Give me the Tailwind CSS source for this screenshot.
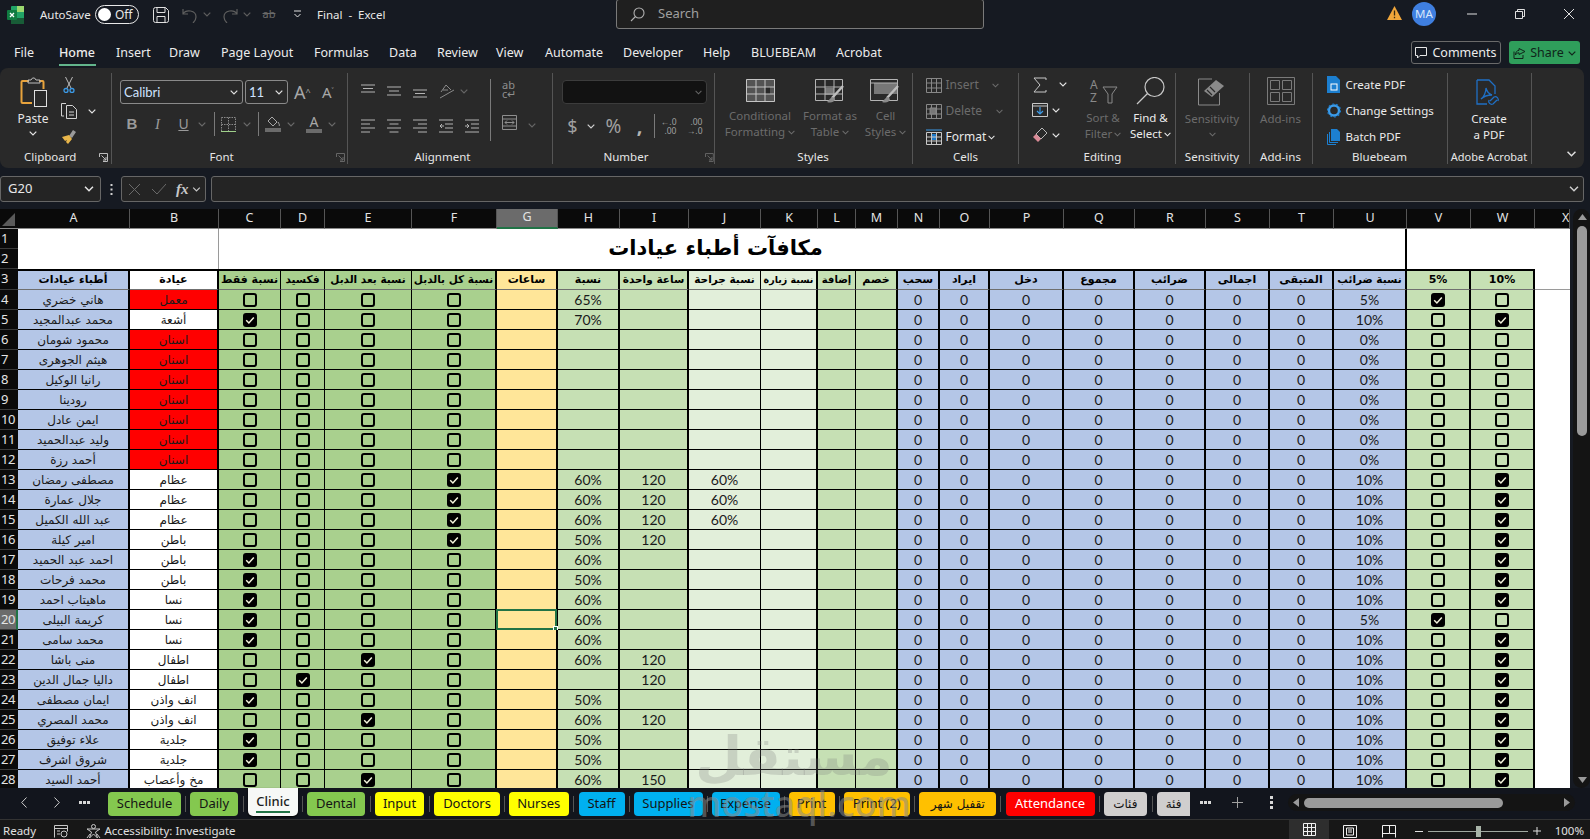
<!DOCTYPE html>
<html lang="en">
<head>
<meta charset="UTF-8">
<title>Final - Excel</title>
<script src="https://cdn.jsdelivr.net/npm/@tailwindcss/browser@4"></script>
</head>
<body class="w-[1590px] h-[839px] overflow-hidden bg-[#161a22] text-[#e8e8e8] font-['Noto_Sans',sans-serif] text-[12px]">

<svg class="hidden">
  <symbol id="chev" viewBox="0 0 8 5"><path d="M.7.7 4 4 7.3.7" fill="none" stroke="currentColor" stroke-width="1.2"/></symbol>
  <symbol id="launch" viewBox="0 0 9 9"><path d="M.5 4V.5H8.500V8.500H4M2.500 2.500 7 7M7 4V7H4" fill="none" stroke="currentColor"/></symbol>
  <symbol id="aTop" viewBox="0 0 14 14"><path d="M0 1h14M2 4.500h10M0 8h14" stroke="currentColor"/></symbol>
  <symbol id="aMid" viewBox="0 0 14 14"><path d="M0 3h14M2 7h10M0 11h14" stroke="currentColor"/></symbol>
  <symbol id="aBot" viewBox="0 0 14 14"><path d="M0 6h14M2 9.500h10M0 13h14" stroke="currentColor"/></symbol>
  <symbol id="aL" viewBox="0 0 14 14"><path d="M0 1h14M0 5h9M0 9h14M0 13h9" stroke="currentColor"/></symbol>
  <symbol id="aC" viewBox="0 0 14 14"><path d="M0 1h14M2.500 5h9M0 9h14M2.500 13h9" stroke="currentColor"/></symbol>
  <symbol id="aR" viewBox="0 0 14 14"><path d="M0 1h14M5 5h9M0 9h14M5 13h9" stroke="currentColor"/></symbol>
  <symbol id="check" viewBox="0 0 14 14"><path d="M3.200 7.300 5.900 10 10.800 4.500" fill="none" stroke="#f4f4dc" stroke-width="1.500"/></symbol>
</svg>

<!-- title bar -->
<div class="h-[29px] flex items-center relative">
  <svg class="ml-[7px] w-[17px] h-[18px] shrink-0" viewBox="0 0 17 18"><rect x="4" y="0" width="13" height="18" rx="1" fill="#21a366"/><rect x="10" y="0" width="7" height="6" fill="#9bd86f"/><rect x="4" y="12" width="13" height="6" fill="#185c37"/><rect x="0" y="4" width="10" height="10" rx="1" fill="#107c41"/><path d="M3 7l4 4M7 7l-4 4" stroke="#fff" stroke-width="1.300"/></svg>
  <span class="ml-[16px] w-[55px] text-[11.500px]">AutoSave</span>
  <div class="w-[44px] h-[19px] rounded-full border border-[#e8e8e8] flex items-center pl-[2px] gap-[4px]">
    <span class="w-[13px] h-[13px] rounded-full bg-white"></span><span class="text-[12px]">Off</span>
  </div>
  <svg class="ml-[14px] w-[16px] h-[16px]" viewBox="0 0 16 16" fill="none" stroke="#e0e0e0"><path d="M.5 2.500a2 2 0 0 1 2-2h10l3 3v10a2 2 0 0 1-2 2h-11a2 2 0 0 1-2-2zM4 .5v5h8v-5M4 15.500v-6h8v6"/></svg>
  <svg class="ml-[13px] w-[16px] h-[16px]" viewBox="0 0 16 16" fill="none" stroke="#5e5e5e" stroke-width="1.200"><path d="M1 2v5h5M1 7c3-5 13-4 13 3 0 2-1 4-3 6"/></svg>
  <svg class="ml-[5px] w-2 h-[5px] text-[#5e5e5e]"><use href="#chev"/></svg>
  <svg class="ml-[11px] w-[16px] h-[16px]" viewBox="0 0 16 16" fill="none" stroke="#5e5e5e" stroke-width="1.200"><path d="M15 2v5h-5M15 7C12 2 2 3 2 10c0 2 1 4 3 6"/></svg>
  <svg class="ml-[5px] w-2 h-[5px] text-[#5e5e5e]"><use href="#chev"/></svg>
  <span class="ml-[10px] w-[16px] text-[11px] text-[#6a6a6a] line-through text-center">ab</span>
  <svg class="ml-[16px] w-[9px] h-[9px]" viewBox="0 0 9 9" fill="none" stroke="#e0e0e0"><path d="M1 1h7M1.500 4l3 3 3-3"/></svg>
  <span class="ml-[15px] text-[11.500px] whitespace-pre">Final  -  Excel</span>
  <div class="absolute left-[616px] -top-px w-[368px] h-[30px] rounded-[3px] bg-[#1f1f1f] border border-[#7a7a7a] flex items-center pl-[13px]">
    <svg class="w-[15px] h-[15px]" viewBox="0 0 15 15" fill="none" stroke="#b0b0b0" stroke-width="1.100"><circle cx="9" cy="6" r="5"/><path d="M5.500 9.500 1 14"/></svg>
    <span class="ml-[13px] text-[13px] text-[#a0a0a0]">Search</span>
  </div>
  <svg class="absolute left-[1387px] top-[6px] w-[15px] h-[14px]" viewBox="0 0 15 14"><path d="M7.500 0 15 14H0z" fill="#f0a63a"/><path d="M7.500 4.500v5M7.500 10.800v1.500" stroke="#3a2a10" stroke-width="1.300"/></svg>
  <div class="absolute left-[1412px] top-[2px] w-[24px] h-[24px] rounded-full bg-[#3f7fe0] flex items-center justify-center text-[11.500px] text-[#d8e6fb]">MA</div>
  <svg class="absolute left-[1467px] top-[13px] w-[10px] h-[2px]"><path d="M0 1h10" stroke="#e0e0e0"/></svg>
  <svg class="absolute left-[1515px] top-[9px] w-[10px] h-[10px]" viewBox="0 0 10 10" fill="none" stroke="#e0e0e0"><path d="M.5 2.500h7v7h-7zM2.500 2.500v-2h7v7h-2"/></svg>
  <svg class="absolute left-[1564px] top-[9px] w-[10px] h-[10px]" viewBox="0 0 10 10" stroke="#e0e0e0"><path d="M0 0l10 10M10 0 0 10"/></svg>
</div>

<!-- ribbon tabs -->
<div class="mt-[12px] h-[23px] pl-[14px] flex items-start text-[12.500px] text-[#ececec]">
  <div class="h-[23px] pt-[3px] flex items-start">
    <span class="w-[45px]">File</span>
    <span class="w-[57px]"><span class="block w-[37px] pb-px border-b-2 border-[#63b58c] font-medium">Home</span></span>
    <span class="w-[53px]">Insert</span>
    <span class="w-[52px]">Draw</span>
    <span class="w-[93px]">Page Layout</span>
    <span class="w-[75px]">Formulas</span>
    <span class="w-[48px]">Data</span>
    <span class="w-[59px]">Review</span>
    <span class="w-[49px]">View</span>
    <span class="w-[78px]">Automate</span>
    <span class="w-[80px]">Developer</span>
    <span class="w-[48px]">Help</span>
    <span class="w-[85px]">BLUEBEAM</span>
    <span class="w-[575px]">Acrobat</span>
  </div>
  <div class="w-[90px] h-[23px] pt-[1px] rounded-[3px] border border-[#6a6a6a] flex items-center justify-center gap-[5px] text-[12.500px]">
    <svg class="w-[12px] h-[12px]" viewBox="0 0 12 12" fill="none" stroke="#e8e8e8"><path d="M.5.5h11v8H5l-2.500 2.500V8.500h-2z"/></svg>Comments
  </div>
  <div class="ml-[8px] w-[71px] h-[23px] pt-[1px] rounded-[3px] bg-[#2f9e5b] flex items-center justify-center gap-[4px] text-[#10251a]">
    <svg class="w-[13px] h-[12px]" viewBox="0 0 13 12" fill="none" stroke="#10251a"><path d="M1 4.500v7h9V8M6 1.500l6 3-6 3V5.800C4 5.800 3 7 2.500 8 2.500 5 4 3.500 6 3.300z"/></svg>
    <span class="text-[12.500px]">Share</span>
    <svg class="w-2 h-[5px]"><use href="#chev"/></svg>
  </div>
</div>

<!-- ribbon -->
<div class="mt-[4px] w-[1584px] h-[100px] pt-[5px] rounded-[8px] bg-[#292929] flex text-[11.500px] leading-[14px] text-[#e6e6e6]">

  <!-- Clipboard -->
  <div class="w-[111.500px] h-[91px] border-r border-[#555] flex flex-col">
    <div class="flex-1 flex pt-[4px]">
      <div class="ml-[5px] w-[56px] flex flex-col items-center">
        <svg class="w-[27px] h-[30px]" viewBox="0 0 27 30" fill="none"><path d="M9 4H2.500a1 1 0 0 0-1 1v20a1 1 0 0 0 1 1H12M19 4h3.500a1 1 0 0 1 1 1v7" stroke="#e8a33d" stroke-width="2"/><path d="M8 6V3h3l1.500-2h2L16 3h4v3z" stroke="#bdbdbd"/><rect x="14.500" y="13.500" width="12" height="16" stroke="#e0e0e0"/></svg>
        <span class="mt-[5px] text-[12px]">Paste</span>
        <svg class="mt-[5px] w-2 h-[5px]"><use href="#chev"/></svg>
      </div>
      <div class="flex flex-col gap-[10px]">
        <svg class="ml-[2px] w-[12px] h-[16px]" viewBox="0 0 12 16" fill="none"><path d="M2.500 0 8 11M9.500 0 4 11" stroke="#bdbdbd"/><circle cx="3" cy="13.500" r="2" stroke="#3c9be8" stroke-width="1.300"/><circle cx="9" cy="13.500" r="2" stroke="#3c9be8" stroke-width="1.300"/></svg>
        <div class="flex items-center">
          <svg class="w-[16px] h-[16px]" viewBox="0 0 16 16" fill="none" stroke="#d4d4d4"><path d="M3 13H.5V.5H5M5.500 2.500h6l4 4v9h-10zM8 9h5M8 12h5"/></svg>
          <svg class="ml-[11px] w-2 h-[5px]"><use href="#chev"/></svg>
        </div>
        <svg class="w-[16px] h-[16px]" viewBox="0 0 16 16"><path d="M8 7l4-6 3 2-4 6z" fill="#9a9a9a"/><path d="M1 8l7-2 3 4-4 5-2-2 1-2-2 1z" fill="#e9b64a"/></svg>
      </div>
    </div>
    <div class="h-[14px] flex items-center pl-[24px]"><span class="w-[75px]">Clipboard</span><svg class="w-[9px] h-[9px] text-[#bdbdbd]"><use href="#launch"/></svg></div>
  </div>

  <!-- Font -->
  <div class="w-[236px] h-[91px] border-r border-[#555] flex flex-col">
    <div class="flex-1 pt-[7px]">
      <div class="flex items-center pl-[8.500px]">
        <div class="w-[122.500px] h-[24px] rounded-[3px] border border-[#8a8a8a] pl-[3px] pr-[4px] flex items-center justify-between text-[#cfe4ff] font-['Lato',sans-serif] text-[13px]">Calibri<svg class="w-2 h-[5px] text-[#e0e0e0]"><use href="#chev"/></svg></div>
        <div class="ml-[2.500px] w-[43px] h-[24px] rounded-[3px] border border-[#8a8a8a] pl-[3px] pr-[4px] flex items-center justify-between text-[#cfe4ff] font-['Lato',sans-serif] text-[13px]">11<svg class="w-2 h-[5px] text-[#e0e0e0]"><use href="#chev"/></svg></div>
        <span class="ml-[6px] w-[28px] text-[18px] text-[#a8a8a8]">A<sup class="text-[9px]">^</sup></span>
        <span class="w-[14px] text-[15px] text-[#a8a8a8]">A<sup class="text-[8px]">˅</sup></span>
      </div>
      <div class="mt-[10px] pl-[10px] h-[20px] flex items-center text-[#9a9a9a]">
        <span class="w-[21px] text-center text-[15px] font-bold font-['Liberation_Sans',sans-serif]">B</span>
        <span class="w-[30px] text-center text-[15px] italic font-['Liberation_Serif',serif]">I</span>
        <span class="w-[22px] text-center text-[14px] underline">U</span>
        <span class="w-[15px] flex justify-center"><svg class="w-2 h-[5px] text-[#6a6a6a]"><use href="#chev"/></svg></span>
        <span class="ml-[4px] shrink-0 w-px h-[24px] bg-[#7a7a7a]"></span>
        <svg class="ml-[6px] w-[15px] h-[15px]" viewBox="0 0 15 15" fill="none" stroke="#8a8a8a" stroke-dasharray="1.500 1"><path d="M.5.5h14v14H.5zM7.500.5v14M.5 7.500h14"/><path d="M0 14.500h15" stroke="#9fd08a" stroke-dasharray="none"/></svg>
        <span class="w-[22px] flex justify-center"><svg class="w-2 h-[5px] text-[#6a6a6a]"><use href="#chev"/></svg></span>
        <span class="shrink-0 w-px h-[24px] bg-[#7a7a7a]"></span>
        <svg class="ml-[6.500px] w-[16px] h-[16px]" viewBox="0 0 16 16" fill="none"><path d="M7 1l5 5-4 4-5-5zM13 6c1 2 2 3 1 4" stroke="#a8a8a8"/><rect y="12" width="16" height="4" fill="#6b6b6b"/></svg>
        <span class="w-[20px] flex justify-center"><svg class="w-2 h-[5px] text-[#6a6a6a]"><use href="#chev"/></svg></span>
        <div class="ml-[5px] w-[16px] h-[18px] flex flex-col items-center text-[14px] leading-[13px] text-[#a8a8a8]">A<span class="mt-[1px] w-[16px] h-[4px] bg-[#6b6b6b]"></span></div>
        <span class="w-[20px] flex justify-center"><svg class="w-2 h-[5px] text-[#6a6a6a]"><use href="#chev"/></svg></span>
      </div>
    </div>
    <div class="h-[14px] flex items-center pl-[98px]"><span class="w-[126px]">Font</span><svg class="w-[9px] h-[9px] text-[#666]"><use href="#launch"/></svg></div>
  </div>

  <!-- Alignment -->
  <div class="w-[205px] h-[91px] border-r border-[#555] flex flex-col">
    <div class="flex-1 pl-[13.500px] flex">
      <div class="w-[129px] text-[#b4b4b4]">
        <div class="mt-[10px] flex items-center gap-[12px]">
          <svg class="w-[14px] h-[14px]"><use href="#aTop"/></svg><svg class="w-[14px] h-[14px]"><use href="#aMid"/></svg><svg class="w-[14px] h-[14px]"><use href="#aBot"/></svg>
          <svg class="w-[16px] h-[16px]" viewBox="0 0 16 16" fill="none" stroke="#8a8a8a"><path d="M2 9l5-7 5 5M4 7h5M1 15 15 7"/></svg>
          <svg class="-ml-[7px] w-2 h-[5px] text-[#666]"><use href="#chev"/></svg>
        </div>
        <div class="mt-[20px] flex items-center gap-[12px]">
          <svg class="w-[14px] h-[14px]"><use href="#aL"/></svg><svg class="w-[14px] h-[14px]"><use href="#aC"/></svg><svg class="w-[14px] h-[14px]"><use href="#aR"/></svg>
          <svg class="w-[14px] h-[14px]" viewBox="0 0 14 14" fill="none" stroke="currentColor"><path d="M0 1h14M6 5h8M6 9h8M0 13h14M5 7H1M3 5 1 7l2 2"/></svg>
          <svg class="w-[14px] h-[14px]" viewBox="0 0 14 14" fill="none" stroke="currentColor"><path d="M0 1h14M6 5h8M6 9h8M0 13h14M0 7h4M2 5l2 2-2 2"/></svg>
        </div>
      </div>
      <span class="mt-[6px] shrink-0 h-[62px] w-px bg-[#7a7a7a]"></span>
      <div class="ml-[11px] text-[#8e8e8e]">
        <div class="mt-[7px] w-[15px] text-[11px] leading-[9px]">ab<br>c↵</div>
        <svg class="mt-[17px] w-[15px] h-[15px]" viewBox="0 0 15 15" fill="none" stroke="#8e8e8e"><path d="M.5.5h14v14H.5zM.5 4h14M.5 11h14M3 7.500h9M5 5.500l-2 2 2 2M10 5.500l2 2-2 2"/></svg>
      </div>
      <svg class="mt-[50px] ml-[11px] w-2 h-[5px] text-[#666]"><use href="#chev"/></svg>
    </div>
    <div class="h-[14px] flex items-center pl-[67px]"><span class="w-[130px]">Alignment</span></div>
  </div>

  <!-- Number -->
  <div class="w-[162px] h-[91px] border-r border-[#555] flex flex-col">
    <div class="flex-1 pl-[9px]">
      <div class="mt-[7px] w-[145px] h-[24px] rounded-[4px] bg-[#121212] border border-[#3c3c3c] flex items-center justify-end pr-[4px]"><svg class="w-[7px] h-[5px] text-[#666]"><use href="#chev"/></svg></div>
      <div class="mt-[10px] h-[24px] flex items-center text-[#a0a0a0]">
        <span class="ml-[4px] w-[14px] text-center text-[18px]">$</span>
        <svg class="ml-[7px] w-2 h-[5px] text-[#d0d0d0]"><use href="#chev"/></svg>
        <span class="ml-[8px] w-[22px] text-center text-[19px]">%</span>
        <span class="ml-[10px] w-[10px] text-center text-[20px] font-bold text-[#b4b4b4]">,</span>
        <span class="ml-[9px] shrink-0 w-px h-[24px] bg-[#7a7a7a]"></span>
        <span class="ml-[6px] w-[16px] text-[8.500px] leading-[9px] text-right">←.0<br>.00</span>
        <span class="ml-[10px] w-[16px] text-[8.500px] leading-[9px] text-right">.00<br>→.0</span>
      </div>
    </div>
    <div class="h-[14px] flex items-center pl-[51px]"><span class="w-[103px]">Number</span><svg class="w-[9px] h-[9px] text-[#666]"><use href="#launch"/></svg></div>
  </div>

  <!-- Styles -->
  <div class="w-[198px] h-[91px] border-r border-[#555] flex flex-col">
    <div class="flex-1 flex pl-[4px] text-[#6c6c6c] text-center leading-[16px]">
      <div class="w-[83px] flex flex-col items-center">
        <svg class="mt-[6px] w-[29px] h-[23px]" viewBox="0 0 29 23" fill="none"><path d="M0 0h29v23H0z" fill="#777" fill-opacity=".55"/><path d="M19 8h5v7h-5z" fill="#292929"/><path d="M.5.5h28v22H.5zM.5 8h28M.5 15h28M10 .5v22M19 .5v22" stroke="#c4c4c4"/></svg>
        <span class="mt-[6px]">Conditional</span>
        <span class="flex items-center gap-[3px]">Formatting<svg class="w-[7px] h-[5px]"><use href="#chev"/></svg></span>
      </div>
      <div class="w-[57px] flex flex-col items-center">
        <svg class="mt-[6px] w-[31px] h-[25px]" viewBox="0 0 31 25" fill="none"><path d="M10 9h9v7h-9z" fill="#777"/><path d="M.5.5h27v21H.5zM.5 8h27M.5 15h27M10 .5v21M19 .5v21" stroke="#b4b4b4"/><path d="M28 7 17 19" stroke="#bdbdbd" stroke-width="2.500"/><path d="M18 18c-2 0-4 3-6 5 3 1 7 1 8-3z" fill="#8a8a8a"/></svg>
        <span class="mt-[4px] whitespace-nowrap">Format as</span>
        <span class="flex items-center gap-[3px]">Table<svg class="w-[7px] h-[5px]"><use href="#chev"/></svg></span>
      </div>
      <div class="ml-[2px] w-[50px] flex flex-col items-center">
        <svg class="mt-[6px] w-[31px] h-[25px]" viewBox="0 0 31 25" fill="none"><path d="M4 4h23v11H4z" fill="#777"/><path d="M.5.5h27v21H.5z" stroke="#b4b4b4"/><path d="M.5 4h27" stroke="#b4b4b4"/><path d="M28 7 17 19" stroke="#bdbdbd" stroke-width="2.500"/><path d="M18 18c-2 0-4 3-6 5 3 1 7 1 8-3z" fill="#8a8a8a"/></svg>
        <span class="mt-[4px]">Cell</span>
        <span class="flex items-center gap-[3px]">Styles<svg class="w-[7px] h-[5px]"><use href="#chev"/></svg></span>
      </div>
    </div>
    <div class="h-[14px] text-center">Styles</div>
  </div>

  <!-- Cells -->
  <div class="w-[106px] h-[91px] border-r border-[#555] flex flex-col">
    <div class="flex-1 pl-[13px] pt-[4px] flex flex-col gap-[10px] text-[12px]">
      <div class="h-[16px] flex items-center text-[#6c6c6c]">
        <svg class="w-[16px] h-[15px]" viewBox="0 0 16 15" fill="none" stroke="#888"><path d="M.5.5h15v14H.5zM.5 5h15M.5 10h15M5.500.5v14M10.500.5v14"/></svg>
        <span class="ml-[4px] w-[46px]">Insert</span><svg class="w-[7px] h-[5px]"><use href="#chev"/></svg>
      </div>
      <div class="h-[16px] flex items-center text-[#6c6c6c]">
        <svg class="w-[16px] h-[15px]" viewBox="0 0 16 15" fill="none" stroke="#888"><path d="M.5.5h15v14H.5zM.5 5h15M.5 10h15M5.500.5v14M10.500.5v14"/><path d="M4 4h6v6H4z" fill="#777"/></svg>
        <span class="ml-[4px] w-[50px]">Delete</span><svg class="w-[7px] h-[5px]"><use href="#chev"/></svg>
      </div>
      <div class="h-[16px] flex items-center text-[#e8e8e8]">
        <svg class="w-[16px] h-[16px]" viewBox="0 0 16 16" fill="none"><path d="M5 5h6v6H5z" fill="#1c78c8"/><path d="M.5 3.500h15v12H.5zM.5 8h15M.5 12h15M5.500 3.500v12M10.500 3.500v12" stroke="#c8c8c8"/><path d="M0 1h16" stroke="#3c9be8"/></svg>
        <span class="ml-[4px] w-[42px]">Format</span><svg class="w-[7px] h-[5px]"><use href="#chev"/></svg>
      </div>
    </div>
    <div class="h-[14px] text-center pl-[1px]">Cells</div>
  </div>

  <!-- Editing -->
  <div class="w-[157px] h-[91px] border-r border-[#555] flex flex-col">
    <div class="flex-1 flex">
      <div class="w-[57px] pl-[13px] pt-[3px] flex flex-col gap-[9px]">
        <div class="h-[17px] flex items-center"><svg class="ml-[1px] w-[14px] h-[16px]" viewBox="0 0 14 16" fill="none" stroke="#c8c8c8"><path d="M13 3V1H1l6 7-6 7h12v-2"/></svg><svg class="ml-[12px] w-2 h-[5px]"><use href="#chev"/></svg></div>
        <div class="h-[16px] flex items-center"><svg class="w-[16px] h-[14px]" viewBox="0 0 16 14" fill="none"><path d="M.5.5h15v13H.5zM.5 3h15" stroke="#c8c8c8"/><path d="M8 4v7M5 8l3 3 3-3" stroke="#3c9be8" stroke-width="1.200"/></svg><svg class="ml-[4px] w-2 h-[5px]"><use href="#chev"/></svg></div>
        <div class="h-[16px] flex items-center"><svg class="w-[16px] h-[16px]" viewBox="0 0 16 16" fill="none"><path d="M10 1l5 5-6 6-5-5z" stroke="#b8b8b8"/><path d="M4 7l5 5-3 3-5-5z" fill="#d98a96"/></svg><svg class="ml-[4px] w-2 h-[5px]"><use href="#chev"/></svg></div>
      </div>
      <div class="w-[55px] flex flex-col items-center text-[#6c6c6c] leading-[16px]">
        <svg class="mt-[4px] w-[29px] h-[28px] overflow-visible" viewBox="0 0 29 28" fill="none" stroke="#8a8a8a"><text x="1" y="12" font-size="12" fill="#8a8a8a" stroke="none">A</text><text x="1" y="25" font-size="12" fill="#8a8a8a" stroke="none">Z</text><path d="M14 10h14l-5 7v9h-4v-9z"/></svg>
        <span class="mt-[5px] whitespace-nowrap">Sort &amp;</span>
        <span class="flex items-center gap-[2px]">Filter<svg class="w-[7px] h-[5px]"><use href="#chev"/></svg></span>
      </div>
      <div class="w-[40px] flex flex-col items-center text-[#ececec] leading-[16px]">
        <svg class="mt-[4px] w-[29px] h-[28px]" viewBox="0 0 29 28" fill="none" stroke="#c8c8c8" stroke-width="1.200"><circle cx="18.500" cy="10" r="9.500"/><path d="M11.500 16.500 1 27"/></svg>
        <span class="mt-[5px] whitespace-nowrap">Find &amp;</span>
        <span class="flex items-center gap-[2px]">Select<svg class="w-[7px] h-[5px]"><use href="#chev"/></svg></span>
      </div>
    </div>
    <div class="h-[14px] pl-[65px]">Editing</div>
  </div>

  <!-- Sensitivity -->
  <div class="w-[74px] h-[91px] border-r border-[#555] flex flex-col items-center">
    <svg class="mt-[4px] w-[28px] h-[29px]" viewBox="0 0 28 29" fill="none"><path d="M14 2H.5v26h21V16" stroke="#8a8a8a"/><path d="M6 14 18 3l8 6-12 11z" fill="#8a8a8a"/><path d="M9 13l5 5M12 10l5 5" stroke="#292929" stroke-width="1.200"/></svg>
    <span class="mt-[5px] leading-[16px] text-[#6c6c6c]">Sensitivity</span>
    <svg class="mt-[5px] w-[7px] h-[5px] text-[#6c6c6c]"><use href="#chev"/></svg>
    <span class="mt-auto h-[14px]">Sensitivity</span>
  </div>

  <!-- Add-ins -->
  <div class="w-[63px] h-[91px] border-r border-[#555] flex flex-col items-center">
    <svg class="mt-[4px] w-[28px] h-[28px]" viewBox="0 0 28 28" fill="none" stroke="#7a7a7a"><path d="M.5.5h27v27H.5zM3.500 3.500h9v9h-9zM15.500 3.500h9v9h-9zM3.500 15.500h9v9h-9zM15.500 15.500h9v9h-9z"/></svg>
    <span class="mt-[6px] leading-[16px] text-[#6c6c6c]">Add-ins</span>
    <span class="mt-auto h-[14px]">Add-ins</span>
  </div>

  <!-- Bluebeam -->
  <div class="w-[135px] h-[91px] border-r border-[#555] flex flex-col">
    <div class="flex-1 pl-[14px] pt-[3px] flex flex-col gap-[9px] text-[11.500px] text-[#ececec]">
      <div class="h-[17px] flex items-center gap-[5px]"><svg class="w-[14px] h-[17px]" viewBox="0 0 14 17"><path d="M0 0h9l4 4v13H0z" fill="#1c7fd0"/><rect x="4" y="8" width="6" height="6" fill="none" stroke="#fff"/></svg>Create PDF</div>
      <div class="h-[17px] flex items-center gap-[5px]"><svg class="w-[14px] h-[15px]" viewBox="0 0 14 15"><circle cx="7" cy="7.500" r="5" fill="none" stroke="#3c9be8" stroke-width="2.400"/><circle cx="7" cy="7.500" r="6.500" fill="none" stroke="#1c7fd0" stroke-width="1.200" stroke-dasharray="2 2"/></svg>Change Settings</div>
      <div class="h-[17px] flex items-center gap-[5px]"><svg class="w-[14px] h-[16px]" viewBox="0 0 14 16" fill="none"><path d="M4 0h6l3 3v9H4z" fill="#1c7fd0"/><path d="M2.500 3v10.500H11M.5 5v10.500H9" stroke="#1c7fd0"/></svg>Batch PDF</div>
    </div>
    <div class="h-[14px] text-center">Bluebeam</div>
  </div>

  <!-- Adobe Acrobat -->
  <div class="w-[84px] h-[91px] border-r border-[#555] flex flex-col items-center">
    <svg class="mt-[6px] w-[26px] h-[29px]" viewBox="0 0 26 29" fill="none" stroke="#1f6fc4" stroke-width="1.300"><path d="M1 1h12l6 6v8M1 1v24h10"/><path d="M5 20c3-2 5-7 5-11 1 4 3 6 6 7-4 0-8 1-11 4z"/><path d="M14 22l4-4a3 3 0 0 1 4 4M21 21l-4 4a3 3 0 0 1-4-4"/></svg>
    <span class="mt-[3px] leading-[16px] text-[11.500px] text-[#ececec]">Create</span>
    <span class="leading-[16px] text-[11.500px] text-[#ececec]">a PDF</span>
    <span class="mt-auto h-[14px] whitespace-nowrap text-[11px]">Adobe Acrobat</span>
  </div>

  <div class="flex-1 flex items-end justify-center pb-[11px] pl-[27px]"><svg class="w-[11px] h-[6px] text-[#e0e0e0]"><use href="#chev"/></svg></div>
</div>

<!-- formula bar -->
<div class="mt-[8px] h-[26px] flex items-center w-[1584px]">
  <div class="w-[101px] h-[26px] rounded-[3px] bg-[#242424] border border-[#666] pl-[7px] pr-[6px] flex items-center justify-between text-[13px]">G20<svg class="w-[10px] h-[6px]"><use href="#chev"/></svg></div>
  <svg class="ml-[9px] w-[3px] h-[13px]" viewBox="0 0 3 13" fill="#d0d0d0"><rect width="2" height="2" x=".5" y="1"/><rect width="2" height="2" x=".5" y="5.500"/><rect width="2" height="2" x=".5" y="10"/></svg>
  <div class="ml-[8px] w-[85px] h-[26px] rounded-[3px] bg-[#242424] border border-[#666] flex items-center pl-[7px]">
    <svg class="w-[11px] h-[11px]" viewBox="0 0 11 11" stroke="#6a6a6a"><path d="M0 0l11 11M11 0 0 11"/></svg>
    <svg class="ml-[12px] w-[14px] h-[11px]" viewBox="0 0 14 11" fill="none" stroke="#6a6a6a"><path d="M0 5l5 5 9-10"/></svg>
    <span class="ml-[10px] font-['Liberation_Serif',serif] italic font-bold text-[15px] text-[#c8c8c8]">fx</span>
    <svg class="ml-[3px] w-[9px] h-[5px] text-[#c8c8c8]"><use href="#chev"/></svg>
  </div>
  <div class="ml-[5px] flex-1 h-[26px] rounded-[3px] bg-[#242424] border border-[#666] flex items-center justify-end pr-[4px]"><svg class="w-[10px] h-[6px] text-[#d0d0d0]"><use href="#chev"/></svg></div>
</div>

<!-- sheet + vertical scrollbar -->
<div class="mt-[7px] h-[579px] flex">
  <div id="sheet" class="w-[1570px] h-[579px] overflow-hidden grid content-start grid-cols-[18px_112px_89px_62px_44px_87px_85px_61px_62px_69px_72px_57px_38px_42px_42px_50px_74px_71px_71px_64px_64px_73px_64px_64px_35px] grid-rows-[19.500px_20.500px_19.500px_21.500px_repeat(25,20px)] bg-white text-black font-['Lato',sans-serif] text-[14px]"></div>
  <div class="ml-[3px] w-[17px] h-[579px] rounded-full bg-[#141414] flex flex-col items-center pt-[5px] pl-[1px]">
    <svg class="w-[9px] h-[6px]" viewBox="0 0 9 6"><path d="M4.500 0 9 6H0z" fill="#9a9a9a"/></svg>
    <div class="mt-[6px] w-[10px] h-[210px] rounded-full bg-[#9a9a9a]"></div>
    <svg class="mt-auto mb-[5px] w-[9px] h-[6px]" viewBox="0 0 9 6"><path d="M4.500 6 9 0H0z" fill="#9a9a9a"/></svg>
  </div>
</div>

<!-- sheet tabs -->
<div class="relative h-[32px] bg-[#12151d] border-b border-[#333] flex text-[13px] text-[#141414]">
  <div class="w-[108px] h-[28px] flex items-center text-[#cfcfcf] text-[14px]">
    <svg class="ml-[21px] w-[6px] h-[11px]" viewBox="0 0 6 11" fill="none" stroke="#cfcfcf"><path d="M5.500.5.700 5.500l4.800 5"/></svg>
    <svg class="ml-[27px] w-[6px] h-[11px]" viewBox="0 0 6 11" fill="none" stroke="#cfcfcf"><path d="M.5.5l4.800 5-4.800 5"/></svg>
    <svg class="ml-[19px] w-[11px] h-[3px]" viewBox="0 0 11 3" fill="#d8d8d8"><rect width="3" height="3"/><rect x="4" width="3" height="3"/><rect x="8" width="3" height="3"/></svg>
  </div>
  <div class="flex items-start pt-[4px]">
    <div class="w-[73px] h-[24px] rounded-[4px] bg-[#84c84f] flex items-center justify-center">Schedule</div>
    <span class="mx-[4px] mt-[4px] w-px h-[16px] bg-[#555]"></span>
    <div class="w-[48px] h-[24px] rounded-[4px] bg-[#84c84f] flex items-center justify-center">Daily</div>
    <span class="mx-[4.500px] mt-[4px] w-px h-[16px] bg-[#555]"></span>
    <div class="-mt-[4px] w-[50px] h-[28px] rounded-b-[5px] bg-[#f7f8f6] flex flex-col items-center justify-end pb-[3px] font-medium text-[#1d1d1d] shadow-[0_1px_2px_#000]"><span class="leading-[18px]">Clinic</span><span class="mt-[1px] w-[34px] h-[2px] bg-[#217346]"></span></div>
    <span class="mx-[4px] mt-[4px] w-px h-[16px] bg-[#555]"></span>
    <div class="w-[58px] h-[24px] rounded-[4px] bg-[#84c84f] flex items-center justify-center">Dental</div>
    <span class="mx-[4.500px] mt-[4px] w-px h-[16px] bg-[#555]"></span>
    <div class="w-[49px] h-[24px] rounded-[4px] bg-[#ffff00] flex items-center justify-center">Input</div>
    <span class="mx-[4.500px] mt-[4px] w-px h-[16px] bg-[#555]"></span>
    <div class="w-[66px] h-[24px] rounded-[4px] bg-[#ffff00] flex items-center justify-center">Doctors</div>
    <span class="mx-[4px] mt-[4px] w-px h-[16px] bg-[#555]"></span>
    <div class="w-[59.500px] h-[24px] rounded-[4px] bg-[#ffff00] flex items-center justify-center">Nurses</div>
    <span class="mx-[4.500px] mt-[4px] w-px h-[16px] bg-[#555]"></span>
    <div class="w-[46px] h-[24px] rounded-[4px] bg-[#00b0f0] flex items-center justify-center">Staff</div>
    <span class="mx-[4px] mt-[4px] w-px h-[16px] bg-[#555]"></span>
    <div class="w-[69px] h-[24px] rounded-[4px] bg-[#00b0f0] flex items-center justify-center">Supplies</div>
    <span class="mx-[4px] mt-[4px] w-px h-[16px] bg-[#555]"></span>
    <div class="w-[68px] h-[24px] rounded-[4px] bg-[#00b0f0] flex items-center justify-center">Expense</div>
    <span class="mx-[4px] mt-[4px] w-px h-[16px] bg-[#555]"></span>
    <div class="w-[46px] h-[24px] rounded-[4px] bg-[#ffc000] flex items-center justify-center">Print</div>
    <span class="mx-[4px] mt-[4px] w-px h-[16px] bg-[#555]"></span>
    <div class="w-[66.600px] h-[24px] rounded-[4px] bg-[#ffc000] flex items-center justify-center">Print (2)</div>
    <span class="mx-[4.200px] mt-[4px] w-px h-[16px] bg-[#555]"></span>
    <div class="w-[76.700px] h-[24px] rounded-[4px] bg-[#ffc000] flex items-center justify-center font-['DejaVu_Sans',sans-serif] text-[12px]">تقفيل شهر</div>
    <span class="mx-[4.200px] mt-[4px] w-px h-[16px] bg-[#555]"></span>
    <div class="w-[89px] h-[24px] rounded-[4px] bg-[#ff0000] flex items-center justify-center text-white">Attendance</div>
    <span class="mx-[4px] mt-[4px] w-px h-[16px] bg-[#555]"></span>
    <div class="w-[43.500px] h-[24px] rounded-[4px] bg-[#d0cece] flex items-center justify-center font-['DejaVu_Sans',sans-serif] text-[12px]">فئات</div>
    <span class="mx-[4.500px] mt-[4px] w-px h-[16px] bg-[#555]"></span>
    <div class="w-[33px] h-[24px] rounded-l-[4px] bg-[#d0cece] flex items-center justify-center font-['DejaVu_Sans',sans-serif] text-[12px]">فئة</div>
  </div>
  <svg class="ml-[10px] mt-[13px] w-[11px] h-[3px]" viewBox="0 0 11 3" fill="#d8d8d8"><rect width="3" height="3"/><rect x="4" width="3" height="3"/><rect x="8" width="3" height="3"/></svg>
  <svg class="ml-[21px] mt-[9px] w-[11px] h-[11px]" viewBox="0 0 11 11" stroke="#a0a0a0"><path d="M5.500 0v11M0 5.500h11"/></svg>
  <svg class="ml-[27px] mt-[8px] w-[3px] h-[13px]" viewBox="0 0 3 13" fill="#d8d8d8"><rect width="3" height="3"/><rect y="5" width="3" height="3"/><rect y="10" width="3" height="3"/></svg>
  <div class="ml-[15px] mt-[6px] w-[287px] h-[17px] rounded-full bg-[#141414] flex items-center pl-[4.500px] pr-[5px]">
    <svg class="w-[6px] h-[9px]" viewBox="0 0 6 9"><path d="M0 4.500 6 0v9z" fill="#9a9a9a"/></svg>
    <div class="ml-[5.500px] w-[199px] h-[10px] rounded-full bg-[#9a9a9a]"></div>
    <svg class="ml-auto w-[6px] h-[9px]" viewBox="0 0 6 9"><path d="M6 4.500 0 0v9z" fill="#9a9a9a"/></svg>
  </div>
  <!-- watermark -->
  <div class="absolute left-[698px] top-[0px] w-[202px] flex justify-center text-[36px] leading-[32px] font-medium text-[#8a8a8a]/55 whitespace-nowrap">mostaql.com</div>
  <div class="absolute left-[696px] -top-[61px] w-[196px] h-[60px] flex justify-center text-[54px] leading-[60px] font-bold font-['DejaVu_Sans',sans-serif] text-[#777]/25 whitespace-nowrap">مستقل</div>
</div>

<!-- status bar -->
<div class="h-[19px] pt-[3px] bg-[#171717] flex items-center text-[11.500px] text-[#e0e0e0]">
  <span class="ml-[3px] w-[51px]">Ready</span>
  <svg class="w-[14px] h-[13px]" viewBox="0 0 14 13" fill="none" stroke="#c8c8c8"><path d="M.5 12.500V.5h13v6M.5 3.500h13M3 6h3M3 9h3"/><circle cx="10" cy="9" r="3"/></svg>
  <svg class="ml-[17.500px] w-[15px] h-[15px]" viewBox="0 0 15 15" fill="none" stroke="#c8c8c8"><circle cx="7.500" cy="2.500" r="2"/><path d="M1 5h13L9.500 8l2 6-4-4-4 4 2-6zM11 10l3 4M4 10l-3 4"/></svg>
  <span class="ml-[4px]">Accessibility: Investigate</span>
  <div class="ml-auto -mt-[3px] w-[40px] h-[19px] bg-[#2e2e2e] flex items-center justify-center">
    <svg class="w-[13px] h-[13px]" viewBox="0 0 13 13" fill="none" stroke="#f0f0f0"><path d="M.5.5h12v12H.5zM.5 4.500h12M.5 8.500h12M4.500.5v12M8.500.5v12"/></svg>
  </div>
  <svg class="ml-[13.500px] w-[14px] h-[13px]" viewBox="0 0 14 13" fill="none" stroke="#f0f0f0"><path d="M.5.5h13v12H.5zM3.500 3h7v7h-7zM5 5h4M5 7h4"/></svg>
  <svg class="ml-[25.500px] w-[14px] h-[13px]" viewBox="0 0 14 13" fill="none" stroke="#f0f0f0"><path d="M.5 12.500V.5h13v12M.5 8.500h7V.5M7.500 8.500h6"/></svg>
  <span class="ml-[19px] w-[8px] h-px bg-[#e0e0e0]"></span>
  <div class="relative ml-[5px] w-[99.500px] h-px bg-[#a0a8a0]"><span class="absolute left-[48px] -top-[5px] w-[5px] h-[11px] bg-[#a8b4a8]"></span></div>
  <svg class="ml-[5.500px] w-[8px] h-[8px]" viewBox="0 0 8 8" stroke="#e0e0e0"><path d="M4 0v8M0 4h8"/></svg>
  <span class="ml-[13.500px] mr-[6px]">100%</span>
</div>

<script>
  // columns: background, right border and heading size of each data column
  const columns = [
    { bg: 'bg-[#b4c6e7]', line: 'border-r-2', size: 'text-[11px]', head: 'أطباء عيادات' },
    { bg: 'bg-white', line: 'border-r-2', size: 'text-[11px]', head: 'عيادة' },
    { bg: 'bg-[#a9d08e]', line: 'border-r', size: 'text-[11px]', head: 'نسبة فقط' },
    { bg: 'bg-[#a9d08e]', line: 'border-r', size: 'text-[10.500px]', head: 'فكسيد' },
    { bg: 'bg-[#a9d08e]', line: 'border-r', size: 'text-[10.500px]', head: 'نسبة بعد الدبل' },
    { bg: 'bg-[#a9d08e]', line: 'border-r-2', size: 'text-[10.500px]', head: 'نسبة كل بالدبل' },
    { bg: 'bg-[#ffe699]', line: 'border-r-2', size: 'text-[11px]', head: 'ساعات' },
    { bg: 'bg-[#c6e0b4]', line: 'border-r-2', size: 'text-[11px]', head: 'نسبة' },
    { bg: 'bg-[#c6e0b4]', line: 'border-r-2', size: 'text-[10.500px]', head: 'ساعة واحدة' },
    { bg: 'bg-[#e2efda]', line: 'border-r', size: 'text-[10.500px]', head: 'نسبة جراحة' },
    { bg: 'bg-[#e2efda]', line: 'border-r-2', size: 'text-[9.500px]', head: 'نسبة زيارة' },
    { bg: 'bg-[#c6e0b4]', line: 'border-r', size: 'text-[10px]', head: 'إضافة' },
    { bg: 'bg-[#c6e0b4]', line: 'border-r-2', size: 'text-[11px]', head: 'خصم' },
    { bg: 'bg-[#b4c6e7]', line: 'border-r-2', size: 'text-[11px]', head: 'سحب' },
    { bg: 'bg-[#b4c6e7]', line: 'border-r-2', size: 'text-[11px]', head: 'ايراد' },
    { bg: 'bg-[#b4c6e7]', line: 'border-r-2', size: 'text-[11px]', head: 'دخل' },
    { bg: 'bg-[#b4c6e7]', line: 'border-r-2', size: 'text-[11px]', head: 'مجموع' },
    { bg: 'bg-[#b4c6e7]', line: 'border-r-2', size: 'text-[11px]', head: 'ضرائب' },
    { bg: 'bg-[#b4c6e7]', line: 'border-r-2', size: 'text-[11px]', head: 'اجمالى' },
    { bg: 'bg-[#b4c6e7]', line: 'border-r-2', size: 'text-[11px]', head: 'المتبقى' },
    { bg: 'bg-[#b4c6e7]', line: 'border-r-2', size: 'text-[10.500px]', head: 'نسبة ضرائب' },
    { bg: 'bg-[#c6e0b4]', line: 'border-r-2', size: 'text-[11px]', head: '5%' },
    { bg: 'bg-[#c6e0b4]', line: 'border-r-2', size: 'text-[11px]', head: '10%' },
  ];
  const letters = 'ABCDEFGHIJKLMNOPQRSTUVWX'.split('');

  const doctors = ['هاني خضري','محمد عبدالمجيد','محمود شومان','هيثم الجوهرى','رانيا الوكيل','رودينا','ايمن عادل','وليد عبدالحميد','أحمد رزة','مصطفى رمضان','جلال عمارة','عبد الله الكميل','امير كيلة','احمد عبد الحميد','محمد فرحات','ماهيتاب احمد','كريمة البيلى','محمد سامى','منى باشا','داليا جمال الدين','ايمان مصطفى','محمد المصري','علاء توفيق','شروق اشرف','أحمد السيد'];
  const clinics = ['معمل','أشعة','اسنان','اسنان','اسنان','اسنان','اسنان','اسنان','اسنان','عظام','عظام','عظام','باطن','باطن','باطن','نسا','نسا','نسا','اطفال','اطفال','انف واذن','انف واذن','جلدية','جلدية','مخ وأعصاب'];
  const checks = {
    2: [5, 17, 18, 19, 20, 21, 24, 26, 27],
    3: [23],
    4: [22, 25, 28],
    5: [13, 14, 15, 16],
    21: [4, 20],
    22: [5, 13, 14, 15, 16, 17, 18, 19, 21, 22, 23, 24, 25, 26, 27, 28],
  };
  const percent = { 4: '65%', 5: '70%', 13: '60%', 14: '60%', 15: '60%', 16: '50%', 17: '60%', 18: '50%', 19: '60%', 20: '60%', 21: '60%', 22: '60%', 24: '50%', 25: '60%', 26: '50%', 27: '50%', 28: '60%' };
  const hourly = { 13: 120, 14: 120, 15: 120, 16: 120, 22: 120, 23: 120, 25: 120, 28: 150 };
  const surgery = { 13: '60%', 14: '60%', 15: '60%' };

  function checkbox(on) {
    if (on) return '<span class="block w-[14px] h-[14px] rounded-[3px] bg-black"><svg class="w-[14px] h-[14px]"><use href="#check"/></svg></span>';
    return '<span class="block w-[14px] h-[14px] rounded-[3px] border-2 border-black"></span>';
  }

  function taxRate(row) {
    if (row === 4 || row === 20) return '5%';
    if (row === 5 || row >= 13) return '10%';
    return '0%';
  }

  function rowHeader(label, active) {
    const tone = active ? 'bg-[#6b6b6b] border-r-2 border-r-[#217346]' : 'bg-[#0a0a0a]';
    return `<div class="${tone} col-start-1 border-b border-b-[#3a3a3a] pl-[1px] flex items-center font-['Noto_Sans',sans-serif] text-[13px] tracking-[-0.5px] text-[#e4e4e4]">${label}</div>`;
  }

  function cellText(row, col) {
    if (col === 7) return percent[row] || '';
    if (col === 8) return hourly[row] || '';
    if (col === 9) return surgery[row] || '';
    if (col >= 13 && col <= 19) return '0';
    if (col === 20) return taxRate(row);
    return '';
  }

  let html = '';

  // column letters
  html += `<div class="bg-[#0a0a0a] border-b border-b-[#8a8a8a] overflow-hidden"><svg class="w-[18px] h-[19px]" viewBox="0 0 18 19"><path d="M15 4v13H2z" fill="#5a5a5a"/></svg></div>`;
  letters.forEach((letter) => {
    const tone = letter === 'G' ? 'bg-[#6b6b6b] border-b-2 border-b-[#217346]' : 'bg-[#0a0a0a] border-b border-b-[#8a8a8a]';
    const place = letter === 'X' ? 'justify-start pl-[27px]' : 'justify-center';
    html += `<div class="${tone} ${place} border-r border-r-[#555] flex items-center overflow-hidden font-['Noto_Sans',sans-serif] text-[12.500px] text-[#e4e4e4]">${letter}</div>`;
  });

  // rows 1 and 2 hold the merged title
  html += rowHeader('1');
  html += `<div class="col-span-2 row-span-2 border-r border-r-[#9a9a9a]"></div>`;
  html += `<div class="col-span-16 row-span-2 pl-[6px] flex items-center justify-center font-['DejaVu_Sans',sans-serif] font-bold text-[21px] leading-none">مكافآت أطباء عيادات</div>`;
  html += `<div class="col-span-3 row-span-2 border-r-2 border-r-black"></div>`;
  html += `<div class="col-span-3 row-span-2"></div>`;
  html += rowHeader('2');

  // row 3 headings
  html += rowHeader('3');
  columns.forEach((c) => {
    html += `<div class="${c.bg} ${c.line} ${c.size} border-r-black border-t-2 border-t-black border-b border-b-[#6f6f6f] flex items-center justify-center whitespace-nowrap overflow-hidden font-['DejaVu_Sans',sans-serif] font-bold">${c.head}</div>`;
  });
  html += `<div class="border-b border-b-[#9a9a9a]"></div>`;

  // rows 4 to 28
  for (let row = 4; row <= 28; row++) {
    html += rowHeader(row, row === 20);
    columns.forEach((c, col) => {
      let bg = c.bg;
      let inner = cellText(row, col);
      let font = '';
      if (col === 0) { inner = doctors[row - 4]; font = "font-['DejaVu_Sans',sans-serif] text-[12px]"; }
      if (col === 1) {
        inner = clinics[row - 4];
        font = "font-['DejaVu_Sans',sans-serif] text-[12px]";
        if (row === 4 || (row >= 6 && row <= 12)) bg = 'bg-[#ff0000]';
      }
      if (checks[col]) inner = checkbox(checks[col].includes(row));
      if (row === 20 && col === 6) {
        inner = '<div class="absolute -inset-[1px] border-2 border-[#217346]"><span class="absolute -right-[3px] -bottom-[3px] w-[5px] h-[5px] bg-[#217346] border border-white"></span></div>';
      }
      html += `<div class="${bg} ${c.line} ${font} relative border-r-black border-b border-b-black flex items-center justify-center text-[#1a1a1a] whitespace-nowrap">${inner}</div>`;
    });
    html += '<div></div>';
  }

  document.getElementById('sheet').innerHTML = html;
</script>
</body>
</html>
